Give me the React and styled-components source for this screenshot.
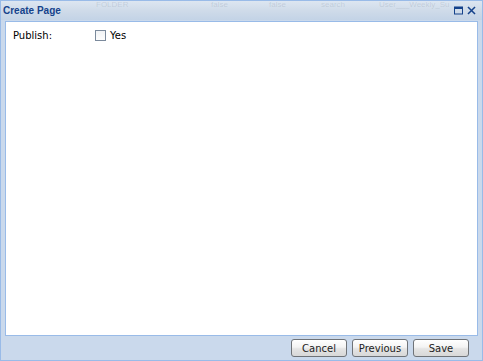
import React, { useState } from 'react';
import styled, { createGlobalStyle } from 'styled-components';

const GlobalStyle = createGlobalStyle`
  html, body {
    margin: 0;
    padding: 0;
    background: #cfdcea;
  }
  body {
    font-family: Tahoma, 'DejaVu Sans', 'Liberation Sans', sans-serif;
    font-size: 11px;
  }
`;

const Window = styled.div`
  width: 483px;
  height: 361px;
  box-sizing: border-box;
  display: flex;
  flex-direction: column;
  background: #cad9ec;
  border: 1px solid #99bbe8;
  overflow: hidden;
`;

const Header = styled.div`
  position: relative;
  height: 19px;
  flex: none;
  display: flex;
  align-items: center;
  padding: 0 5px 0 2px;
  background: linear-gradient(#dde6f1 0%, #cfdbe9 50%, #c3d3e6 100%);
`;

const GhostRow = styled.div`
  position: absolute;
  left: 0;
  top: 0;
  right: 0;
  height: 9px;
  font-family: 'Liberation Sans', Arial, sans-serif;
  font-size: 8px;
  line-height: 8px;
  color: rgba(100, 115, 135, 0.2);
  pointer-events: none;
`;

const Ghost = styled.span`
  position: absolute;
  top: 0;
  left: ${p => p.x}px;
`;

const Title = styled.span`
  flex: 1;
  font-family: 'Liberation Sans', Tahoma, sans-serif;
  font-weight: bold;
  font-size: 10px;
  color: #15428b;
`;

const Tools = styled.div`
  display: flex;
  gap: 2px;
  align-items: center;
`;

const Tool = styled.svg`
  width: 11px;
  height: 11px;
  display: block;
`;

const Frame = styled.div`
  flex: 1;
  display: flex;
  padding: 1px 4px 0 4px;
  min-height: 0;
`;

const Body = styled.div`
  flex: 1;
  background: #fff;
  border: 1px solid #99bbe8;
  padding: 6px 7px;
`;

const FormRow = styled.div`
  display: flex;
  align-items: center;
  height: 14px;
`;

const Label = styled.label`
  width: 82px;
  font-family: 'DejaVu Sans', Tahoma, sans-serif;
  font-size: 10px;
  color: #000;
`;

const CheckWrap = styled.label`
  display: flex;
  align-items: center;
  gap: 4px;
  font-family: 'DejaVu Sans', Tahoma, sans-serif;
  font-size: 10px;
  color: #000;
  cursor: pointer;
`;

const CheckBox = styled.span`
  width: 9px;
  height: 9px;
  border: 1px solid #7b8a9c;
  background: linear-gradient(#f1f3f5, #fdfdfd);
  display: inline-flex;
  align-items: center;
  justify-content: center;
  font-size: 9px;
  line-height: 1;
  color: #15428b;
`;

const Footer = styled.div`
  height: 24px;
  flex: none;
  display: flex;
  justify-content: flex-end;
  align-items: center;
  gap: 5px;
  padding: 0 13px 0 0;
`;

const Button = styled.button`
  width: 56px;
  height: 18px;
  box-sizing: border-box;
  border: 1px solid #6f7378;
  border-radius: 3px;
  background: linear-gradient(#ffffff 0%, #f3f3f3 45%, #e4e4e4 55%, #d8d8d8 100%);
  font-family: 'DejaVu Sans', Tahoma, sans-serif;
  font-size: 10px;
  color: #222;
  padding: 0;
  cursor: pointer;
`;

export default function App() {
  const [checked, setChecked] = useState(false);
  return (
    <>
      <GlobalStyle />
      <Window>
        <Header>
          <GhostRow>
            <Ghost x={95}>FOLDER</Ghost>
            <Ghost x={210}>false</Ghost>
            <Ghost x={268}>false</Ghost>
            <Ghost x={320}>search</Ghost>
            <Ghost x={378}>User___Weekly_Su</Ghost>
          </GhostRow>
          <Title>Create Page</Title>
          <Tools>
            <Tool viewBox="0 0 11 11">
              <rect x="1.5" y="2" width="8" height="7" fill="none" stroke="#15428b" strokeWidth="1" />
              <rect x="1.5" y="2" width="8" height="2" fill="#15428b" />
            </Tool>
            <Tool viewBox="0 0 11 11">
              <path d="M2.5 2.5 L8.5 8.5 M8.5 2.5 L2.5 8.5" stroke="#15428b" strokeWidth="1.5" strokeLinecap="square" />
            </Tool>
          </Tools>
        </Header>
        <Frame>
          <Body>
            <FormRow>
              <Label>Publish:</Label>
              <CheckWrap onClick={() => setChecked(c => !c)}>
                <CheckBox>{checked ? '✓' : ''}</CheckBox>
                Yes
              </CheckWrap>
            </FormRow>
          </Body>
        </Frame>
        <Footer>
          <Button>Cancel</Button>
          <Button>Previous</Button>
          <Button>Save</Button>
        </Footer>
      </Window>
    </>
  );
}
